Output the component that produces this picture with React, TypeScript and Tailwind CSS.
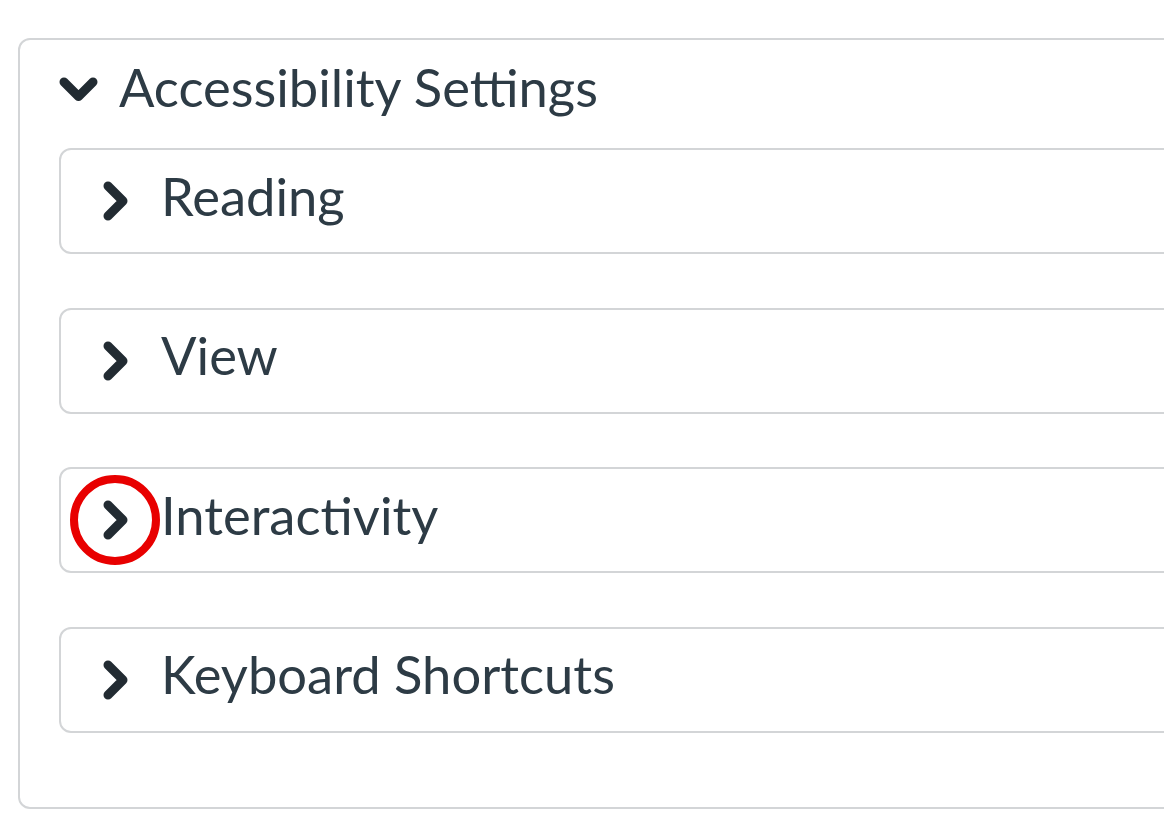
const ChevronRight = () => (
  <svg aria-hidden="true" width="25" height="40" viewBox="0 0 25 40" className="shrink-0">
    <polyline
      points="5,5 20,20 5,35"
      fill="none"
      stroke="#222b32"
      strokeWidth="9"
      strokeLinecap="round"
      strokeLinejoin="round"
    />
  </svg>
);

const ChevronDown = () => (
  <svg aria-hidden="true" width="39" height="25" viewBox="0 0 39 25" className="shrink-0 -mt-[2px]">
    <polyline
      points="5,5 19.5,19.5 34,5"
      fill="none"
      stroke="#222b32"
      strokeWidth="9"
      strokeLinecap="round"
      strokeLinejoin="round"
    />
  </svg>
);

const sections = ["Reading", "View", "Interactivity", "Keyboard Shortcuts"];

export default function App() {
  return (
    <div
      className="h-[823px] w-[1164px] overflow-hidden bg-white text-[#2d3b45]"
      style={{ fontFamily: "Lato, 'Open Sans', sans-serif" }}
    >
      <div className="ml-[18px] mt-[38px] w-[1200px] rounded-[12px] border-2 border-[#d3d5d7] pb-[74px] pl-[39px]">
        <div className="mb-[8px] flex h-[100px] items-center gap-[21px]">
          <ChevronDown />
          <span className="-mt-[6px] text-[52.5px] leading-none">Accessibility Settings</span>
        </div>
        <div className="flex flex-col gap-[53.5px]">
          {sections.map((name) => (
            <div
              key={name}
              className="relative flex h-[106px] items-center gap-[33px] rounded-[12px] border-2 border-[#d3d5d7] pl-[42px]"
            >
              <ChevronRight />
              <span className="-mt-[10px] text-[52.5px] leading-none">{name}</span>
              {name === "Interactivity" && (
                <span className="pointer-events-none absolute left-[9px] top-[6px] h-[90px] w-[90px] rounded-full border-[8px] border-[#e80000]" />
              )}
            </div>
          ))}
        </div>
      </div>
    </div>
  );
}
